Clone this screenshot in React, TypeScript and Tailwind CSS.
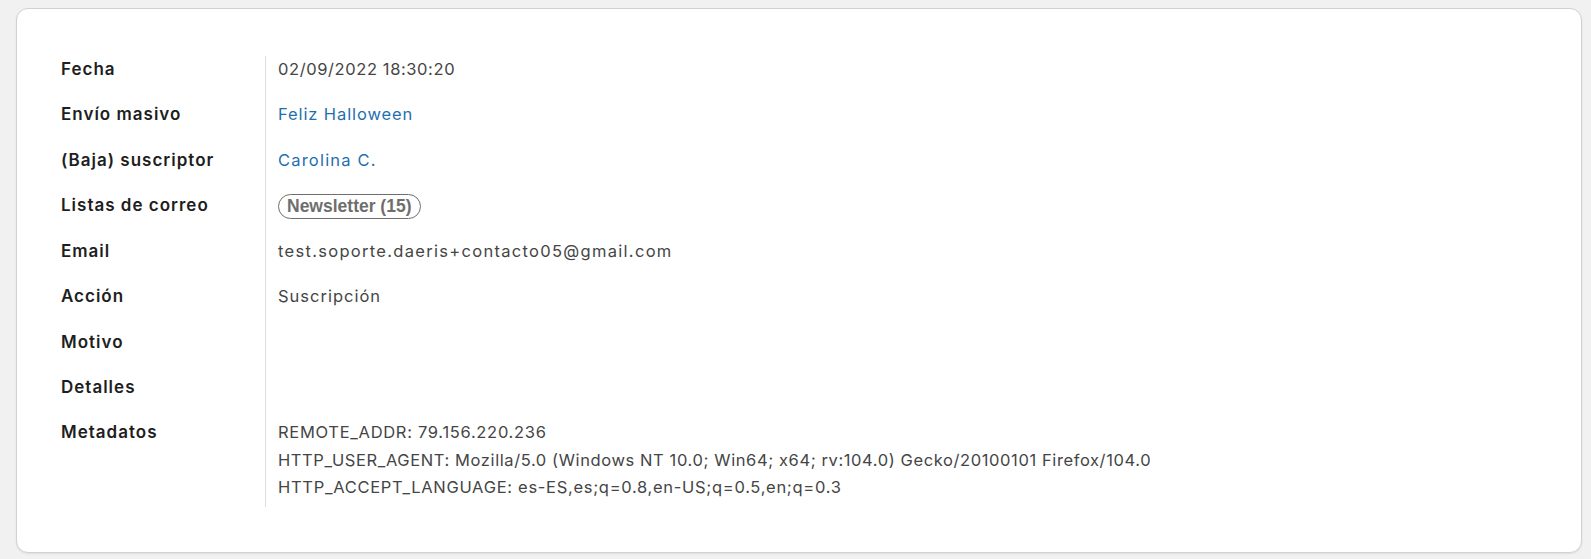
const ROWS: { label: string; value?: React.ReactNode }[] = [
  { label: 'Fecha', value: '02/09/2022 18:30:20' },
  { label: 'Envío masivo', value: <a className="tracking-[0.9px] text-[#1f6fb0]">Feliz Halloween</a> },
  { label: '(Baja) suscriptor', value: <a className="tracking-[1.2px] text-[#1f6fb0]">Carolina C.</a> },
  {
    label: 'Listas de correo',
    value: (
      <span className="inline-flex h-[25px] items-center rounded-full border border-[#6e6e6e] px-[8px] align-middle font-['Liberation_Sans',Arial,sans-serif] text-[17.5px] font-bold tracking-normal text-[#6e6e6e]">
        Newsletter (15)
      </span>
    ),
  },
  { label: 'Email', value: <span className="tracking-[1.3px]">test.soporte.daeris+contacto05@gmail.com</span> },
  { label: 'Acción', value: <span className="tracking-[1px]">Suscripción</span> },
  { label: 'Motivo' },
  { label: 'Detalles' },
]

const META = [
  { text: 'REMOTE_ADDR: 79.156.220.236', cls: 'tracking-[0.7px]' },
  {
    text: 'HTTP_USER_AGENT: Mozilla/5.0 (Windows NT 10.0; Win64; x64; rv:104.0) Gecko/20100101 Firefox/104.0',
    cls: 'tracking-[0.6px]',
  },
  { text: 'HTTP_ACCEPT_LANGUAGE: es-ES,es;q=0.8,en-US;q=0.5,en;q=0.3', cls: 'tracking-[0.7px]' },
]

export default function App() {
  return (
    <div className="min-h-[559px] bg-[#f1f1f2] pt-2 font-['Inter',sans-serif]">
      <div className="ml-4 mr-[9px] rounded-xl border border-[#d0d1d8] bg-white pt-[47px] pb-[45px] pl-[44px] shadow-[0_1px_2px_rgba(0,0,0,0.08)]">
        {ROWS.map((row) => (
          <div key={row.label} className="flex leading-[26px]">
            <div className="w-[205px] shrink-0 border-r border-[#dcdcdc] pb-[19.25px] text-[17px] font-semibold tracking-[1px] text-[#1e1e1e]">
              {row.label}
            </div>
            <div className="pl-3 pb-[19.25px] text-[16.5px] tracking-[0.6px] text-[#454545]">{row.value}</div>
          </div>
        ))}

        {/* Metadatos */}
        <div className="flex">
          <div className="w-[205px] shrink-0 border-r border-[#dcdcdc] pb-[5.5px] text-[17px] leading-[26px] font-semibold tracking-[1px] text-[#1e1e1e]">
            Metadatos
          </div>
          <div className="pl-3 pb-[5.5px] text-[16.5px] leading-[27.5px] text-[#454545]">
            {META.map((line) => (
              <div key={line.text} className={line.cls}>
                {line.text}
              </div>
            ))}
          </div>
        </div>
      </div>
    </div>
  )
}
